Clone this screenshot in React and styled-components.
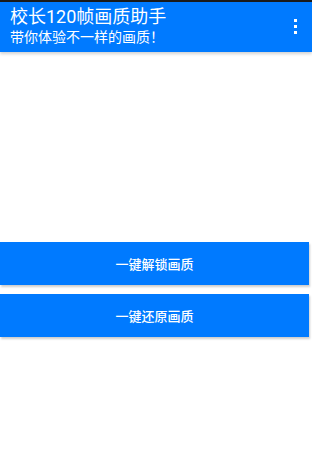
import styled, { createGlobalStyle } from 'styled-components'

const Global = createGlobalStyle`
  html, body { margin: 0; padding: 0; background: #fff; }
  body { font-family: Roboto, "Noto Sans CJK SC", sans-serif; }
`

const Page = styled.div`
  width: 312px;
  height: 472px;
  display: flex;
  flex-direction: column;
  border-top: 2px solid #1a1a1a;
  box-sizing: border-box;
  overflow: hidden;
`

const Toolbar = styled.div`
  height: 50px;
  background: #007aff;
  display: flex;
  align-items: center;
  justify-content: space-between;
  padding: 0 15px 2px 10px;
  box-sizing: border-box;
  box-shadow: 0 2px 3px rgba(0,0,0,0.18);
  color: #fff;
`

const Titles = styled.div`
  display: flex;
  flex-direction: column;
`

const Title = styled.div`
  font-size: 18px;
  line-height: 22px;
`

const Sub = styled.div`
  font-size: 14px;
  line-height: 18px;
`

const Menu = styled.div`
  display: flex;
  flex-direction: column;
  gap: 3px;
  span {
    width: 3px;
    height: 3px;
    background: #fff;
  }
`

const Body = styled.div`
  padding-top: 190px;
  display: flex;
  flex-direction: column;
  gap: 9px;
`

const Button = styled.div`
  width: 309px;
  height: 43px;
  background: #007aff;
  color: #fff;
  font-size: 13px;
  font-weight: 500;
  display: flex;
  align-items: center;
  justify-content: center;
  box-shadow: 1px 2px 2px rgba(0,0,0,0.2);
`

export default function App() {
  return (
    <Page>
      <Global />
      <Toolbar>
        <Titles>
          <Title>校长120帧画质助手</Title>
          <Sub>带你体验不一样的画质！</Sub>
        </Titles>
        <Menu><span /><span /><span /></Menu>
      </Toolbar>
      <Body>
        <Button>一键解锁画质</Button>
        <Button>一键还原画质</Button>
      </Body>
    </Page>
  )
}
